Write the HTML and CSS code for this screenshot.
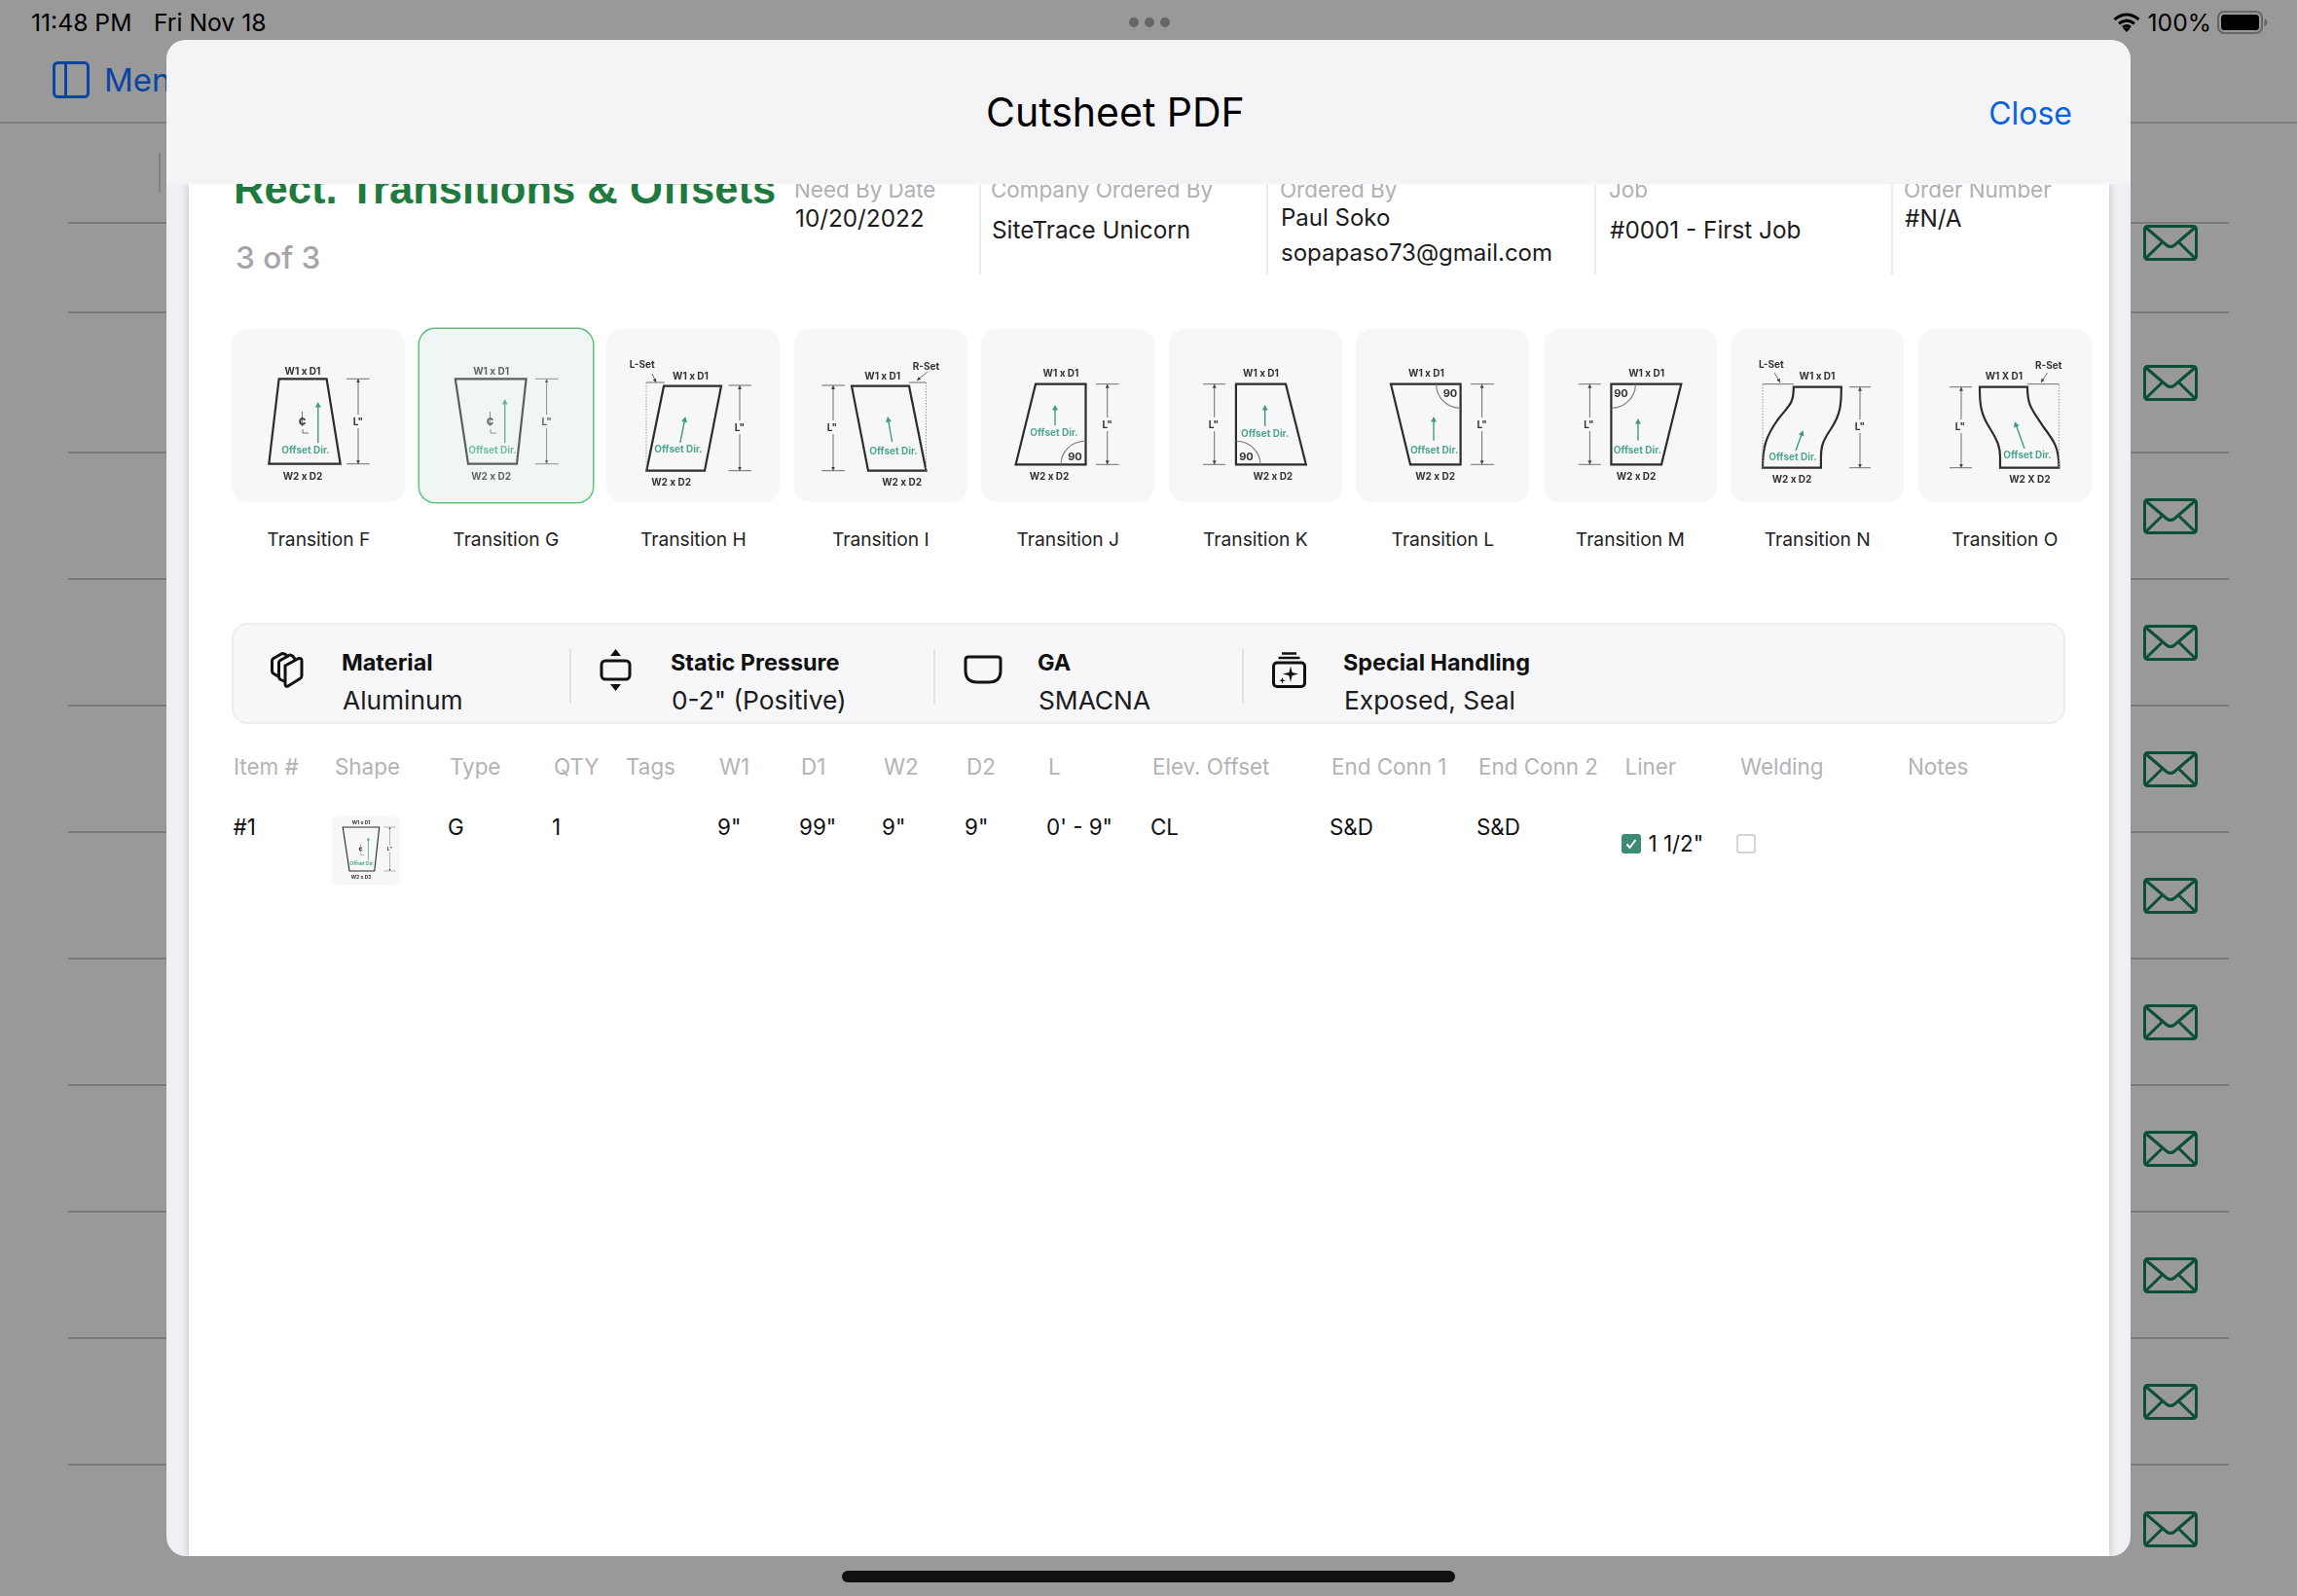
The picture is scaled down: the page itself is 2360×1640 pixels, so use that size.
FILE: index.html
```html
<!DOCTYPE html>
<html lang="en">
<head>
<meta charset="utf-8">
<title>Cutsheet PDF</title>
<link rel="stylesheet" href="styles.css">
</head>
<body>
<svg class="defs" aria-hidden="true">
  <defs>
    <marker id="ah" viewBox="0 0 6 6" refX="3" refY="3" markerWidth="6" markerHeight="6" orient="auto-start-reverse" markerUnits="userSpaceOnUse"><path d="M0 5.6 L3 0 L6 5.6 Z" transform="rotate(90 3 3)" fill="#3f9b7f"/></marker>
    <marker id="dh" viewBox="0 0 4 4" refX="4" refY="2" markerWidth="4" markerHeight="4" orient="auto-start-reverse" markerUnits="userSpaceOnUse"><path d="M0 0 L4 2 L0 4 Z" fill="#444"/></marker>
    <symbol id="env" viewBox="0 0 56 37">
      <rect class="env-line" x="1.5" y="1.5" width="53" height="34" rx="3"/>
      <path class="env-line" d="M3 3 L24 21 Q28 24 32 21 L53 3 M3 34 L19 18.5 M53 34 L37 18.5"/>
    </symbol>
  </defs>
</svg>

<div class="page">
  <header class="status">
    <div class="status-time"><span>11:48 PM</span><span>Fri Nov 18</span></div>
    <div class="status-dots"><i></i><i></i><i></i></div>
    <div class="status-right">
      <svg class="wifi" width="28" height="20" viewBox="0 0 28 20"><path d="M1.5 7 Q14 -3 26.5 7 M6 11.3 Q14 5 22 11.3 M10 15 Q14 12 18 15" fill="none" stroke="#000" stroke-width="3"/><path d="M14 20 L10.6 16.4 Q14 14 17.4 16.4 Z" fill="#000"/></svg>
      <span>100%</span>
      <svg class="battery" width="52" height="24" viewBox="0 0 52 24"><rect x="1" y="1" width="45" height="22" rx="6" fill="none" stroke="#666" stroke-width="2"/><rect x="4" y="4" width="39" height="16" rx="3.5" fill="#000"/><path d="M48.5 8 Q51.5 9 51.5 12 Q51.5 15 48.5 16 Z" fill="#666"/></svg>
    </div>
  </header>

  <nav class="nav">
    <svg class="menu-icon" width="38" height="38" viewBox="0 0 38 38"><rect x="1.5" y="1.5" width="35" height="35" rx="4" fill="none" stroke="#0b45a3" stroke-width="3"/><path d="M13.5 2 V36" stroke="#0b45a3" stroke-width="3"/></svg>
    <span class="menu-text">Menu</span>
  </nav>

  <ul class="rows">
    <li class="row row-first"><i class="row-tick"></i></li>
    <li class="row row-short"><svg class="env"><use href="#env"/></svg></li>
    <li class="row row-tall"><svg class="env"><use href="#env"/></svg></li>
    <li class="row"><svg class="env"><use href="#env"/></svg></li>
    <li class="row"><svg class="env"><use href="#env"/></svg></li>
    <li class="row"><svg class="env"><use href="#env"/></svg></li>
    <li class="row"><svg class="env"><use href="#env"/></svg></li>
    <li class="row"><svg class="env"><use href="#env"/></svg></li>
    <li class="row"><svg class="env"><use href="#env"/></svg></li>
    <li class="row"><svg class="env"><use href="#env"/></svg></li>
    <li class="row"><svg class="env"><use href="#env"/></svg></li>
    <li class="row row-last"><svg class="env"><use href="#env"/></svg></li>
  </ul>

  <section class="modal">
    <header class="modal-head">
      <h1 class="modal-title">Cutsheet PDF</h1>
      <span class="modal-close">Close</span>
    </header>
    <div class="sheet">
      <div class="sheet-head">
        <div class="title-block">
          <h2 class="title">Rect. Transitions &amp; Offsets</h2>
          <p class="count">3 of 3</p>
        </div>
        <div class="field field-date"><span class="label">Need By Date</span><span class="value">10/20/2022</span></div>
        <div class="field field-company"><span class="label">Company Ordered By</span><span class="value value-low">SiteTrace Unicorn</span></div>
        <div class="field field-person"><span class="label">Ordered By</span><span class="value">Paul Soko</span><span class="value value-mail">sopapaso73@gmail.com</span></div>
        <div class="field field-job"><span class="label">Job</span><span class="value value-low">#0001 - First Job</span></div>
        <div class="field field-order"><span class="label">Order Number</span><span class="value">#N/A</span></div>
      </div>

      <div class="cards">
        <figure class="card">
          <div class="tile"><svg class="art" viewBox="0 0 178 178">
            <path class="shape" d="M48.6 51.3 H97.6 L111.7 138.7 H38.3 Z"/>
            <path class="dim" d="M118 51.3 H141.6 M118 138.7 H141.6"/><path class="dim" d="M130 88 V51.3" marker-end="url(#dh)"/><path class="dim" d="M130 102 V138.7" marker-end="url(#dh)"/>
            <text class="lbl" x="130" y="98.5">L"</text>
            <path class="arrow" d="M88.8 117 V78" marker-end="url(#ah)"/>
            <text class="off" x="76" y="128">Offset Dir.</text>
            <text class="lbl" x="73" y="46.5">W1 x D1</text><text class="lbl" x="73" y="154.5">W2 x D2</text>
            <path class="dim" d="M72.5 85 V90 M73 103 V107 H79"/><text class="cl" x="72.5" y="100">¢</text>
          </svg></div>
          <figcaption>Transition F</figcaption>
        </figure>

        <figure class="card card-active">
          <div class="tile"><svg class="art art-dim" viewBox="0 0 178 178">
            <g id="art-g">
              <path class="shape" d="M36.8 51.3 H109.6 L100 138.7 H50 Z"/>
              <path class="dim" d="M119 51.3 H142.8 M119 138.7 H142.8"/><path class="dim" d="M130.6 88 V51.3" marker-end="url(#dh)"/><path class="dim" d="M130.6 102 V138.7" marker-end="url(#dh)"/>
              <text class="lbl" x="130.6" y="98.5">L"</text>
              <path class="arrow" d="M87.7 117 V75" marker-end="url(#ah)"/>
              <text class="off" x="75" y="128">Offset Dir.</text>
              <text class="lbl" x="73.6" y="46.5">W1 x D1</text><text class="lbl" x="73.6" y="154.5">W2 x D2</text>
              <path class="dim" d="M72.5 85 V90 M73 103 V107 H79"/><text class="cl" x="72.5" y="100">¢</text>
            </g>
          </svg></div>
          <figcaption>Transition G</figcaption>
        </figure>

        <figure class="card">
          <div class="tile"><svg class="art" viewBox="0 0 178 178">
            <path class="shape" d="M59 58.7 H118 L101 145.7 H41.3 Z"/>
            <path class="dot" d="M41 55 V145.7"/><path class="dim" d="M41 55 H60"/><path class="dim" d="M47 46 L51 55" marker-end="url(#dh)"/>
            <path class="dim" d="M125.5 58 H149 M125.5 145.7 H149"/><path class="dim" d="M137 94 V58" marker-end="url(#dh)"/><path class="dim" d="M137 108 V145.7" marker-end="url(#dh)"/>
            <text class="lbl" x="137" y="104.5">L"</text>
            <path class="arrow" d="M75.8 117 L80.6 93" marker-end="url(#ah)"/>
            <text class="off" x="74" y="126.5">Offset Dir.</text>
            <text class="lbl" x="36.7" y="39.5">L-Set</text><text class="lbl" x="86.5" y="51.5">W1 x D1</text><text class="lbl" x="66.6" y="161">W2 x D2</text>
          </svg></div>
          <figcaption>Transition H</figcaption>
        </figure>

        <figure class="card">
          <div class="tile"><svg class="art" viewBox="0 0 178 178">
            <path class="shape" d="M59 58.7 H118 L135.5 145.7 H76 Z"/>
            <path class="dot" d="M135.5 55 V145.7"/><path class="dim" d="M118 55 H135.5"/><path class="dim" d="M137 44 L126 53" marker-end="url(#dh)"/>
            <path class="dim" d="M28.3 58 H52 M28.3 145.7 H52"/><path class="dim" d="M40 94 V58" marker-end="url(#dh)"/><path class="dim" d="M40 108 V145.7" marker-end="url(#dh)"/>
            <text class="lbl" x="39" y="104.5">L"</text>
            <path class="arrow" d="M100.6 116 L96.5 93" marker-end="url(#ah)"/>
            <text class="off" x="102" y="128.5">Offset Dir.</text>
            <text class="lbl" x="135.5" y="42">R-Set</text><text class="lbl" x="90.7" y="51.5">W1 x D1</text><text class="lbl" x="110.6" y="161">W2 x D2</text>
          </svg></div>
          <figcaption>Transition I</figcaption>
        </figure>

        <figure class="card">
          <div class="tile"><svg class="art" viewBox="0 0 178 178">
            <path class="shape" d="M56 56.7 H107.5 V139.3 H35.6 Z"/>
            <path class="arc" d="M82 139.3 A25 24 0 0 1 107.5 115.3"/>
            <text class="lbl lbl-big" x="96.5" y="135">90</text>
            <path class="dim" d="M118 56.7 H141.6 M118 139.3 H141.6"/><path class="dim" d="M129.7 91 V56.7" marker-end="url(#dh)"/><path class="dim" d="M129.7 105 V139.3" marker-end="url(#dh)"/>
            <text class="lbl" x="129.7" y="101.5">L"</text>
            <path class="arrow" d="M76 99.3 V81" marker-end="url(#ah)"/>
            <text class="off" x="75" y="109.5">Offset Dir.</text>
            <text class="lbl" x="82" y="48.7">W1 x D1</text><text class="lbl" x="70" y="154.7">W2 x D2</text>
          </svg></div>
          <figcaption>Transition J</figcaption>
        </figure>

        <figure class="card">
          <div class="tile"><svg class="art" viewBox="0 0 178 178">
            <path class="shape" d="M68.9 56.7 H120 L140.8 139.3 H68.9 Z"/>
            <path class="arc" d="M68.9 115.3 A25 24 0 0 1 94 139.3"/>
            <text class="lbl lbl-big" x="79.5" y="135">90</text>
            <path class="dim" d="M35 56.7 H58 M35 139.3 H58"/><path class="dim" d="M46.7 91 V56.7" marker-end="url(#dh)"/><path class="dim" d="M46.7 105 V139.3" marker-end="url(#dh)"/>
            <text class="lbl" x="46" y="101.5">L"</text>
            <path class="arrow" d="M98.7 100 V81" marker-end="url(#ah)"/>
            <text class="off" x="98.7" y="110.5">Offset Dir.</text>
            <text class="lbl" x="94.5" y="48.7">W1 x D1</text><text class="lbl" x="106.8" y="154.7">W2 x D2</text>
          </svg></div>
          <figcaption>Transition K</figcaption>
        </figure>

        <figure class="card">
          <div class="tile"><svg class="art" viewBox="0 0 178 178">
            <path class="shape" d="M36 56.7 H107.6 V139.3 H56 Z"/>
            <path class="arc" d="M82.6 56.7 A25 24.6 0 0 0 107.6 81.3"/>
            <text class="lbl lbl-big" x="97" y="69.5">90</text>
            <path class="dim" d="M118 56.7 H142 M118 139.3 H142"/><path class="dim" d="M129.6 91 V56.7" marker-end="url(#dh)"/><path class="dim" d="M129.6 105 V139.3" marker-end="url(#dh)"/>
            <text class="lbl" x="129.6" y="101.5">L"</text>
            <path class="arrow" d="M80 114.7 V93" marker-end="url(#ah)"/>
            <text class="off" x="80.6" y="128">Offset Dir.</text>
            <text class="lbl" x="72.4" y="48.7">W1 x D1</text><text class="lbl" x="81.6" y="154.7">W2 x D2</text>
          </svg></div>
          <figcaption>Transition L</figcaption>
        </figure>

        <figure class="card">
          <div class="tile"><svg class="art" viewBox="0 0 178 178">
            <path class="shape" d="M69.4 56.7 H141.3 L121 139.3 H69.4 Z"/>
            <path class="arc" d="M94.4 56.7 A25 24.6 0 0 1 69.4 81.3"/>
            <text class="lbl lbl-big" x="79.5" y="69.5">90</text>
            <path class="dim" d="M35.7 56.7 H58.7 M35.7 139.3 H58.7"/><path class="dim" d="M47.4 91 V56.7" marker-end="url(#dh)"/><path class="dim" d="M47.4 105 V139.3" marker-end="url(#dh)"/>
            <text class="lbl" x="46.5" y="101.5">L"</text>
            <path class="arrow" d="M97 114.7 V95" marker-end="url(#ah)"/>
            <text class="off" x="96.4" y="128">Offset Dir.</text>
            <text class="lbl" x="105.6" y="48.7">W1 x D1</text><text class="lbl" x="95" y="154.7">W2 x D2</text>
          </svg></div>
          <figcaption>Transition M</figcaption>
        </figure>

        <figure class="card">
          <div class="tile"><svg class="art" viewBox="0 0 178 178">
            <path class="shape" d="M64.8 59.7 H113.8 C113.8 78 113 88 103 103 C94 116 92.9 122 92.9 132 V142.7 H33 C33 120 37 110 48 94 C60 78 64.8 78 64.8 59.7 Z"/>
            <path class="dot" d="M33 57 V142.7"/><path class="dim" d="M33 56.7 H64.8"/><path class="dim" d="M45 45 L51 55" marker-end="url(#dh)"/>
            <path class="dim" d="M122 59.7 H144 M122 142.7 H144"/><path class="dim" d="M133 93 V59.7" marker-end="url(#dh)"/><path class="dim" d="M133 107 V142.7" marker-end="url(#dh)"/>
            <text class="lbl" x="133" y="103.5">L"</text>
            <path class="arrow" d="M67 125 L73.5 107" marker-end="url(#ah)"/>
            <text class="off" x="64" y="135">Offset Dir.</text>
            <text class="lbl" x="41.8" y="39.5">L-Set</text><text class="lbl" x="89" y="51.5">W1 x D1</text><text class="lbl" x="63" y="157.5">W2 x D2</text>
          </svg></div>
          <figcaption>Transition N</figcaption>
        </figure>

        <figure class="card">
          <div class="tile"><svg class="art" viewBox="0 0 178 178">
            <path class="shape" d="M63 59.7 H112 C112 78 116 82 128 100 C140 116 144.4 122 144.4 142.7 H84 V132 C84 122 82 116 74 103 C64 88 63 78 63 59.7 Z"/>
            <path class="dot" d="M144.4 57 V142.7"/><path class="dim" d="M112 56.7 H144.4"/><path class="dim" d="M132.6 45 L126 55" marker-end="url(#dh)"/>
            <path class="dim" d="M32 59.7 H55 M32 142.7 H55"/><path class="dim" d="M44 93 V59.7" marker-end="url(#dh)"/><path class="dim" d="M44 107 V142.7" marker-end="url(#dh)"/>
            <text class="lbl" x="43" y="103.5">L"</text>
            <path class="arrow" d="M109 122.7 L100 98" marker-end="url(#ah)"/>
            <text class="off" x="112" y="133">Offset Dir.</text>
            <text class="lbl" x="133.7" y="41">R-Set</text><text class="lbl" x="87.8" y="51.5">W1 X D1</text><text class="lbl" x="114.3" y="157.5">W2 X D2</text>
          </svg></div>
          <figcaption>Transition O</figcaption>
        </figure>
      </div>

      <div class="specs">
        <div class="spec spec-material">
          <div class="spec-icon"><svg width="34" height="37" viewBox="0 0 34 37"><path class="ico" d="M15 14 L29 6.5 Q32 6 32 9 V24.5 Q32 26.5 30 27.5 L18 35 Q15 36 15 33 Z"/><path class="ico" d="M15 30.5 L10.5 28.5 Q8.5 27.5 8.5 25 V11 Q8.5 9.5 10 8.5 L20 3 Q23 3 25.5 8.5"/><path class="ico" d="M8.5 25.5 L3.5 22.5 Q1.5 21.5 1.5 19 V9 Q1.5 7.5 3 6.5 L12 1.5 Q15 1.5 17 4"/></svg></div>
          <div class="spec-text"><strong>Material</strong><span>Aluminum</span></div>
        </div>
        <div class="spec">
          <div class="spec-icon"><svg width="33" height="43" viewBox="0 0 33 43"><path class="ico-fill" d="M16.5 0 L22 7 H11 Z M16.5 43 L22 36 H11 Z"/><rect class="ico" x="2" y="12" width="29" height="19" rx="4"/></svg></div>
          <div class="spec-text"><strong>Static Pressure</strong><span>0-2" (Positive)</span></div>
        </div>
        <div class="spec spec-ga">
          <div class="spec-icon"><svg width="40" height="30" viewBox="0 0 40 30"><path class="ico" d="M5 2 H35 Q38 2 38 5 V16 Q38 28 26 28 H14 Q2 28 2 16 V5 Q2 2 5 2 Z"/></svg></div>
          <div class="spec-text"><strong>GA</strong><span>SMACNA</span></div>
        </div>
        <div class="spec">
          <div class="spec-icon"><svg width="35" height="37" viewBox="0 0 35 37"><path class="ico ico-thin" d="M10 1.5 H25 M6.5 6 H28.5"/><rect class="ico" x="1.5" y="11" width="32" height="24.5" rx="3.5"/><path class="ico-fill" d="M19 14.5 L20.6 21 L27 22.6 L20.6 24.2 L19 30.7 L17.4 24.2 L11 22.6 L17.4 21 Z M10.5 26 L11.3 28.5 L13.8 29.3 L11.3 30.1 L10.5 32.6 L9.7 30.1 L7.2 29.3 L9.7 28.5 Z"/></svg></div>
          <div class="spec-text"><strong>Special Handling</strong><span>Exposed, Seal</span></div>
        </div>
      </div>

      <div class="table-row table-head">
        <span>Item #</span><span>Shape</span><span>Type</span><span>QTY</span><span>Tags</span><span>W1</span><span>D1</span><span>W2</span><span>D2</span><span>L</span><span>Elev. Offset</span><span>End Conn 1</span><span>End Conn 2</span><span>Liner</span><span>Welding</span><span>Notes</span>
      </div>
      <div class="table-row table-body">
        <span class="item-no">#1</span>
        <span class="thumb"><svg class="art" viewBox="15 30 136 136"><use href="#art-g"/></svg></span>
        <span>G</span><span>1</span><span></span><span>9"</span><span>99"</span><span>9"</span><span>9"</span><span>0' - 9"</span><span>CL</span><span>S&amp;D</span><span>S&amp;D</span>
        <span class="check-cell"><i class="check check-on"><svg width="20" height="20" viewBox="0 0 20 20"><path d="M5.5 10.5 L8.5 14 L14.5 6" fill="none" stroke="#fff" stroke-width="2"/></svg></i>1 1/2"</span>
        <span class="check-cell"><i class="check"></i></span>
        <span></span>
      </div>
    </div>
  </section>

  <div class="home-bar"></div>
</div>
</body>
</html>
```

FILE: styles.css
```css
* { box-sizing: border-box; }
html, body { margin: 0; padding: 0; }
body { font-family: Inter, "Liberation Sans", sans-serif; color: #000; }
.defs { position: absolute; width: 0; height: 0; }

.page { position: relative; width: 2360px; height: 1640px; overflow: hidden; background: #999; }

/* status bar */
.status { height: 41px; padding: 0 30px 0 32px; display: flex; align-items: center; justify-content: space-between; position: relative; font-size: 24.7px; line-height: 46px; }
.status > * { position: relative; top: 2px; }
.status-time { display: flex; gap: 22.5px; width: 600px; }
.status-dots { display: flex; gap: 6px; }
.status-dots i { display: block; width: 10px; height: 10px; border-radius: 50%; background: #666; }
.status-right { display: flex; align-items: center; width: 600px; justify-content: flex-end; gap: 8px; }
.status-right .battery { margin-left: -2px; }

/* dimmed page behind the sheet */
.nav { height: 86px; padding: 0 0 2px 54px; display: flex; align-items: center; gap: 15px; border-bottom: 2px solid #808080; }
.menu-text { font-size: 33px; color: #0b45a3; }
.rows { list-style: none; margin: 0 70px; padding: 0; }
.row { height: 130px; display: flex; align-items: center; justify-content: flex-end; padding-right: 32px; border-bottom: 2px solid #7a7a7a; }
.row-first { height: 103px; justify-content: flex-start; padding-left: 93px; }
.row-short { height: 92px; align-items: flex-start; padding-top: 1px; }
.row-tall { height: 144px; }
.row-last { border-bottom: 0; }
.row-tick { display: block; width: 2px; height: 41px; background: #808080; }
.env { display: block; width: 56px; height: 37px; }
.env-line { fill: none; stroke: #0b4f35; stroke-width: 3; }

/* modal */
.modal { position: absolute; left: 171px; top: 41px; width: 2018px; height: 1558px; border-radius: 20px; overflow: hidden; background: #efeff4; display: flex; flex-direction: column; }
.modal-head { height: 148px; flex: none; background: #f4f4f6; position: relative; z-index: 2; display: flex; align-items: center; justify-content: flex-end; padding: 0 60px 0 0; }
.modal-title { position: absolute; left: 842px; top: 50px; margin: 0; font-size: 41px; line-height: 48px; font-weight: 400; }
.modal-close { font-size: 32px; color: #0a62e0; position: relative; top: 1px; }

.sheet { flex: 1; margin: 0 22px 0 23px; background: #fff; box-shadow: 0 0 8px rgba(0,0,0,.22); min-height: 0; }

.sheet-head { display: flex; height: 99px; margin-top: -6px; }
.title-block { width: 622px; padding-left: 46px; flex: none; }
.title { margin: -13px 0 0; font-family: "Liberation Sans", Arial, sans-serif; font-size: 43.6px; line-height: 48px; font-weight: 700; color: #1f7a3e; white-space: nowrap; }
.count { margin: 27px 0 0 2px; font-size: 31.5px; line-height: 40px; font-weight: 500; color: #a5a5a9; }

.field { flex: none; display: flex; flex-direction: column; border-left: 2px solid #ececec; padding-left: 10px; height: 99px; }
.field-date { width: 190px; border-left: 0; padding-left: 0; }
.field-company { width: 295px; padding-left: 10px; }
.field-person { width: 337px; padding-left: 12px; }
.field-job { width: 305px; padding-left: 13px; }
.field-order { width: 224px; padding-left: 11px; }
.label { font-size: 22.4px; line-height: 24px; color: #b0b0b2; white-space: nowrap; }
.value { font-size: 24.3px; line-height: 28px; margin-top: 3px; margin-left: 1px; color: #1c1c1e; white-space: nowrap; }
.field-person .value { font-size: 24px; margin-left: 1px; }
.field-person .value-mail { margin-top: 8px; }
.value-low { margin-top: 15px; }

.cards { display: flex; gap: 14.5px; margin: 56px 0 0 44.3px; }
.card { margin: 0; width: 178px; flex: none; }
.tile { width: 178px; height: 178px; border-radius: 16px; background: #f7f7f9; }
.card-active .tile { background: #f0f6f3; box-shadow: 0 0 0 1.5px #5cc278; }
.card figcaption { margin-top: 26px; text-align: center; font-size: 19.2px; line-height: 24px; color: #222; white-space: nowrap; }

.art { display: block; width: 100%; height: 100%; filter: blur(.3px); }
.art-dim { opacity: .75; }
.shape { fill: none; stroke: #2c2c2e; stroke-width: 2.2; }
.dim { fill: none; stroke: #6f6f73; stroke-width: 1; }
.dot { fill: none; stroke: #9a9a9e; stroke-width: 1; stroke-dasharray: 1.5 1.5; }
.arc { fill: none; stroke: #77777b; stroke-width: 1.1; }
.arrow { fill: none; stroke: #3f9b7f; stroke-width: 1.4; }
.lbl { font-family: Inter, sans-serif; font-size: 10px; font-weight: 700; fill: #333; text-anchor: middle; }
.lbl-big { font-size: 11px; }
.off { font-family: Inter, sans-serif; font-size: 10px; font-weight: 700; fill: #4fa88c; text-anchor: middle; }
.cl { font-family: Inter, sans-serif; font-size: 13px; font-weight: 700; fill: #333; text-anchor: middle; }

.specs { display: flex; width: 1884px; height: 104px; margin: 74px 0 0 44px; border: 2px solid #eeeef0; border-radius: 16px; background: #f7f7f9; align-items: center; }
.spec { position: relative; display: flex; align-items: center; height: 100%; padding: 18px 0 0 31px; flex: none; }
.spec::before { content: ""; position: absolute; left: 0; top: 25px; width: 2px; height: 56px; background: #e2e2e4; }
.spec-material { width: 345px; padding-left: 38px; }
.spec-material::before { display: none; }
.spec:nth-child(2) { width: 374px; }
.spec-ga { width: 317px; }
.spec-icon { width: 73px; flex: none; display: flex; align-items: center; height: 56px; position: relative; top: -13px; }
.spec-ga .spec-icon { width: 76px; }
.spec-text { display: flex; flex-direction: column; }
.spec-text strong { font-size: 23.4px; line-height: 26px; font-weight: 700; color: #111; white-space: nowrap; }
.spec-text span { font-size: 26.3px; line-height: 30px; margin: 11px 0 0 1px; color: #1c1c1e; white-space: nowrap; }
.ico { fill: none; stroke: #111; stroke-width: 3; }
.ico-thin { stroke-width: 2.5; }
.ico-fill { fill: #111; }

.table-row { display: grid; grid-template-columns: 104px 118px 107px 74px 96px 84px 85px 85px 84px 107px 184px 151px 150.5px 118.5px 172px 1fr; font-size: 22.4px; line-height: 24px; white-space: nowrap; }
.table-head { margin: 32px 0 0 46px; color: #b3b3b5; }
.table-body { margin: 38px 0 0 44px; color: #111; }
.item-no { padding-left: 1.5px; }
.thumb { display: block; width: 70px; height: 70px; margin: 1px 0 0 -1px; background: #f7f7f9; border-radius: 6px; overflow: hidden; }
.check-cell { display: flex; align-items: center; gap: 8px; height: 24px; margin-top: 17px; margin-left: -2px; }
.check { display: block; width: 20px; height: 20px; border: 2px solid #d4d4d6; border-radius: 3px; flex: none; }
.check-on { background: #3a8a74; border: 0; }
.check-on svg { display: block; }

.home-bar { position: absolute; left: 865px; top: 1614px; width: 630px; height: 12px; border-radius: 6px; background: #111; }
```
